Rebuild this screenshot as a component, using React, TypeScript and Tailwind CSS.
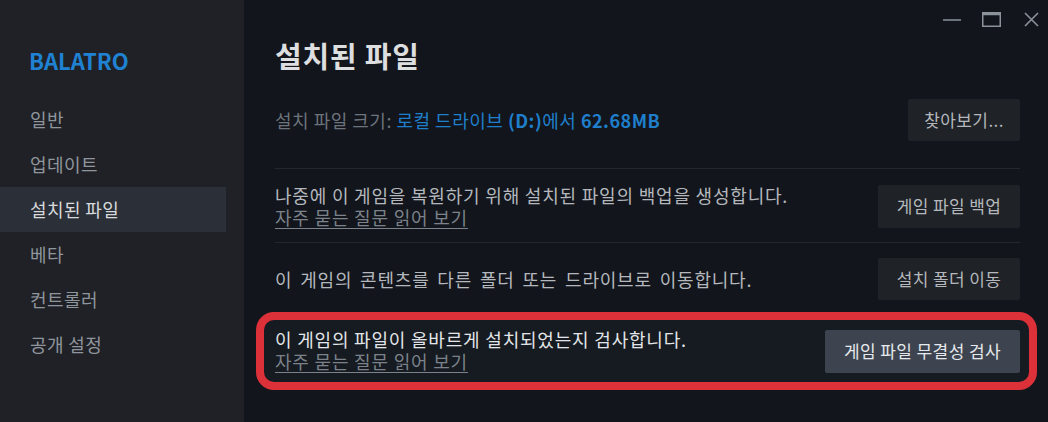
import React from "react";

const font = { fontFamily: '"Noto Sans CJK KR", "Noto Sans", sans-serif' };

function Btn({ children, w, hl = false, h = "h-[42px]" }: { children: React.ReactNode; w: string; hl?: boolean; h?: string }) {
  return (
    <div
      className={`${w} ${h} shrink-0 rounded-[2px] flex items-center justify-center text-[17px] tracking-[0.4px] ${
        hl ? "bg-[#3d4450] text-[#e6e9ec]" : "bg-[#1f2227] text-[#b4b8bc]"
      }`}
    >
      {children}
    </div>
  );
}

export default function App() {
  const nav = ["일반", "업데이트", "설치된 파일", "베타", "컨트롤러", "공개 설정"];
  return (
    <div className="w-[1048px] h-[422px] flex bg-[#12151c] overflow-hidden" style={font}>
      {/* Sidebar */}
      <div className="w-[244px] shrink-0 bg-[#1f2126] flex flex-col pt-[46px]">
        <div className="pl-[29px] h-[28px] leading-[28px] text-[22px] font-bold text-[#1f82d2]">BALATRO</div>
        <div className="mt-[23px] flex flex-col">
          {nav.map((n) => (
            <div
              key={n}
              className={`w-[226px] h-[45px] pl-[30px] flex items-center text-[18px] tracking-[0.4px] ${
                n === "설치된 파일" ? "bg-[#2b2f38] text-[#d8dadc]" : "text-[#8f959c]"
              }`}
            >
              {n}
            </div>
          ))}
        </div>
      </div>

      {/* Main */}
      <div className="flex-1 flex flex-col">
        <div className="h-[37px] flex justify-end items-start pt-[12px] pr-[9px]">
          <svg width="18" height="15" viewBox="0 0 18 15" className="mr-[21px]">
            <line x1="0" y1="8" x2="18" y2="8" stroke="#8b929a" strokeWidth="1.5" />
          </svg>
          <svg width="19" height="15" viewBox="0 0 19 15" className="mr-[23px]">
            <rect x="0.75" y="0.75" width="17.5" height="13.5" fill="none" stroke="#8b929a" strokeWidth="1.5" />
            <line x1="0" y1="2" x2="19" y2="2" stroke="#8b929a" strokeWidth="2.5" />
          </svg>
          <svg width="15" height="15" viewBox="0 0 15 15">
            <path d="M1 1 L14 14 M14 1 L1 14" stroke="#8b929a" strokeWidth="1.6" />
          </svg>
        </div>

        <div className="flex flex-col pl-[31px] pr-[28px]">
          <div className="h-[36px] leading-[36px] text-[29px] tracking-[0.8px] font-bold text-[#dcdedf]">설치된 파일</div>

          <div className="mt-[26px] flex items-center justify-between">
            <div className="text-[18px] tracking-[0.5px] text-[#6c737b]">
              설치 파일 크기: <span className="text-[#1f7fcc]">로컬 드라이브 </span>
              <span className="text-[#1f7fcc] font-bold">(D:)</span>
              <span className="text-[#1f7fcc]">에서 </span>
              <span className="text-[#1f7fcc] font-bold">62.68MB</span>
            </div>
            <Btn w="w-[112px]">찾아보기...</Btn>
          </div>

          <div className="mt-[27px] border-t border-[#23272e] pt-[15px] pb-[14px] flex items-center justify-between">
            <div className="flex flex-col text-[18px] tracking-[0.8px] leading-[22px]">
              <span className="text-[#b4b8bc]">나중에 이 게임을 복원하기 위해 설치된 파일의 백업을 생성합니다.</span>
              <span className="text-[#7b8289] underline underline-offset-[3px] decoration-[#7b8289]">자주 묻는 질문 읽어 보기</span>
            </div>
            <Btn w="w-[142px]" h="h-[43px]">게임 파일 백업</Btn>
          </div>

          <div className="border-t border-[#23272e] pt-[15px] flex items-center justify-between">
            <div className="text-[18px] tracking-[0.8px] [word-spacing:3px] leading-[22px] text-[#b4b8bc]">
              이 게임의 콘텐츠를 다른 폴더 또는 드라이브로 이동합니다.
            </div>
            <Btn w="w-[142px]">설치 폴더 이동</Btn>
          </div>

          <div className="mt-[12px] -ml-[19px] -mr-[17px] h-[78px] border-[8px] border-[#dc3139] rounded-[18px] bg-[#161a21] pl-[11px] pr-[9px] flex items-center justify-between">
            <div className="flex flex-col text-[18px] tracking-[0.8px] leading-[22px] -mt-[2px]">
              <span className="text-[#e3e6e8]">이 게임의 파일이 올바르게 설치되었는지 검사합니다.</span>
              <span className="text-[#7b8289] underline underline-offset-[3px] decoration-[#7b8289]">자주 묻는 질문 읽어 보기</span>
            </div>
            <Btn w="w-[195px]" h="h-[43px]" hl>
              게임 파일 무결성 검사
            </Btn>
          </div>
        </div>
      </div>
    </div>
  );
}
